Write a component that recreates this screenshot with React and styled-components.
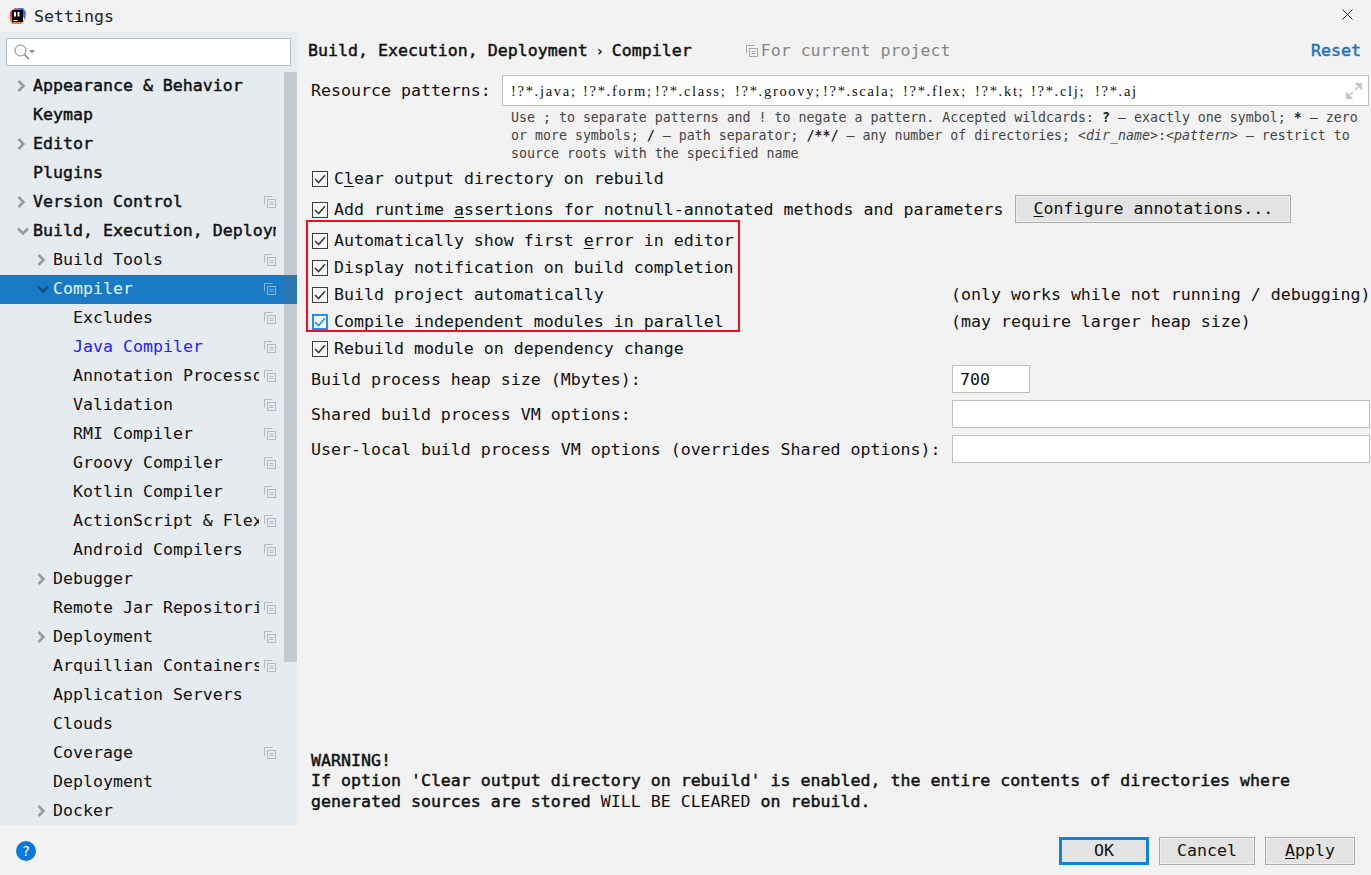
import React from "react";
import styled, { createGlobalStyle, css } from "styled-components";

const mono = `"DejaVu Sans Mono", "Liberation Mono", monospace`;

// the original font's bold is lighter than DejaVu Bold
const heavy = css`
  font-weight: 400;
  -webkit-text-stroke: 0.45px currentColor;
`;

const treeItems = [
  { label: "Appearance & Behavior", level: 0, bold: true, arrow: "right" },
  { label: "Keymap", level: 0, bold: true },
  { label: "Editor", level: 0, bold: true, arrow: "right" },
  { label: "Plugins", level: 0, bold: true },
  { label: "Version Control", level: 0, bold: true, arrow: "right", project: true },
  { label: "Build, Execution, Deployment", level: 0, bold: true, arrow: "down" },
  { label: "Build Tools", level: 1, arrow: "right", project: true },
  { label: "Compiler", level: 1, arrow: "down", project: true, selected: true },
  { label: "Excludes", level: 2, project: true },
  { label: "Java Compiler", level: 2, project: true, modified: true },
  { label: "Annotation Processors", level: 2, project: true },
  { label: "Validation", level: 2, project: true },
  { label: "RMI Compiler", level: 2, project: true },
  { label: "Groovy Compiler", level: 2, project: true },
  { label: "Kotlin Compiler", level: 2, project: true },
  { label: "ActionScript & Flex", level: 2, project: true },
  { label: "Android Compilers", level: 2, project: true },
  { label: "Debugger", level: 1, arrow: "right" },
  { label: "Remote Jar Repositories", level: 1, project: true },
  { label: "Deployment", level: 1, arrow: "right", project: true },
  { label: "Arquillian Containers", level: 1, project: true },
  { label: "Application Servers", level: 1 },
  { label: "Clouds", level: 1 },
  { label: "Coverage", level: 1, project: true },
  { label: "Deployment", level: 1 },
  { label: "Docker", level: 1, arrow: "right" },
];

const patterns = ["!?*.java;", "!?*.form;", "!?*.class;", "!?*.groovy;", "!?*.scala;", "!?*.flex;", "!?*.kt;", "!?*.clj;", "!?*.aj"];

const Global = createGlobalStyle`
  html, body { margin: 0; padding: 0; background: #f2f2f2; }
  * { box-sizing: border-box; }
`;

const Window = styled.div`
  width: 1371px;
  height: 875px;
  display: grid;
  grid-template-rows: 32px 793px 50px;
  background: #f2f2f2;
  color: #111;
  font: 16.6px/20px ${mono};
  overflow: hidden;
`;

const TitleBar = styled.div`
  display: flex;
  align-items: center;
  padding: 0 18px 0 9px;
  gap: 8px;
  color: #222;
`;

const TitleText = styled.span`
  flex: 1;
  padding-top: 2px;
`;

const CloseIcon = styled.svg`
  margin-bottom: 4px;
`;

const Body = styled.div`
  display: grid;
  grid-template-columns: 297px 1fr;
  min-height: 0;
`;

const Sidebar = styled.aside`
  position: relative;
  background: #e6ebf0;
  overflow: hidden;
`;

const SearchBox = styled.div`
  height: 28px;
  margin: 6px 6px 6px;
  background: #fff;
  border: 1px solid #bcbfc2;
  display: flex;
  align-items: center;
  padding-left: 7px;
`;

const Tree = styled.div`
  display: flex;
  flex-direction: column;
`;

const Row = styled.div`
  height: 29px;
  flex: none;
  display: flex;
  align-items: center;
  padding: 0 0 2px ${(p) => 14 + p.$level * 20}px;
  background: ${(p) => (p.$selected ? "#1a7bc4" : "transparent")};
  color: ${(p) => (p.$selected ? "#e6f3fd" : p.$modified ? "#2222ff" : "#111")};
  ${(p) => p.$bold && heavy}
`;

const Arrow = styled.span`
  width: 19px;
  flex: none;
  display: flex;
  align-items: center;
  padding-left: 3px;
`;

const RowLabel = styled.span`
  width: ${(p) => 259 - 33 - p.$level * 20 + (p.$wide ? 17 : 0)}px;
  overflow: hidden;
  white-space: nowrap;
`;

const ProjectSlot = styled.span`
  margin-left: 5px;
  display: flex;
  -webkit-text-stroke: 0;
`;

const ScrollThumb = styled.div`
  position: absolute;
  top: 40px;
  right: 0;
  width: 13px;
  height: 590px;
  background: rgba(100, 105, 115, 0.25);
`;

const Content = styled.main`
  padding: 9px 1px 0 11px;
  display: flex;
  flex-direction: column;
  position: relative;
  min-width: 0;
`;

const Header = styled.div`
  display: flex;
  align-items: center;
  height: 20px;
  margin-bottom: 14px;
`;

const Crumb = styled.span`
  ${heavy}
`;

const CrumbSep = styled.span`
  width: 24px;
  text-align: center;
  font-size: 14px;
  font-weight: 700;
`;

const ScopeNote = styled.span`
  display: flex;
  align-items: center;
  gap: 3px;
  margin-left: 54px;
  color: #858585;
`;

const ResetLink = styled.span`
  margin-left: auto;
  margin-right: 9px;
  color: #1a70c4;
  ${heavy}
`;

const PatternRow = styled.div`
  display: grid;
  grid-template-columns: 191px 867px;
  align-items: center;
  padding-left: 3px;
`;

const TextBox = styled.div`
  height: ${(p) => p.$h || 28}px;
  width: ${(p) => (p.$w ? `${p.$w}px` : "100%")};
  background: #fff;
  border: 1px solid #bfbfbf;
  display: flex;
  align-items: center;
  justify-content: space-between;
  padding: 0 6px 0 7px;
`;

const PatternText = styled.span`
  display: flex;
  padding-left: 1px;
`;

const PatternToken = styled.span`
  width: ${(p) => p.$len * 8}px;
  font: 14.5px/20px "Liberation Serif", serif;
  letter-spacing: 1.7px;
  white-space: nowrap;
  color: #111;
`;

const HelpText = styled.div`
  margin: 3px 0 0 203px;
  font-size: 13.28px;
  line-height: 18px;
  white-space: nowrap;
  color: #444;
  b { color: #222; }
  i { font-style: italic; }
`;

const CheckList = styled.div`
  margin-top: 2px;
  display: flex;
  flex-direction: column;
  padding-left: 4px;
`;

const CheckRow = styled.div`
  height: ${(p) => p.$h || 27}px;
  display: flex;
  align-items: center;
  gap: 6px;
  white-space: nowrap;
`;

const Box = styled.span`
  width: 16px;
  height: 16px;
  flex: none;
  border: ${(p) => (p.$focus ? "2px solid #1f8fe8" : "1px solid #3c3c3c")};
  background: #f7f7f7;
  display: flex;
  align-items: center;
  justify-content: center;
  color: ${(p) => (p.$focus ? "#1f8fe8" : "#3c3c3c")};
`;

const CheckNote = styled.span`
  position: absolute;
  left: 654px;
`;

const Button = styled.span`
  display: inline-flex;
  align-items: center;
  justify-content: center;
  height: 28px;
  width: ${(p) => p.$w}px;
  background: #e3e3e3;
  border: 1px solid #adadad;
  box-shadow: inset 0 0 0 1px #f0f0f0;
  color: #111;
  ${(p) =>
    p.$primary &&
    `border: 3px solid #0a84e0; box-shadow: none;`}
`;

const ConfigureButton = styled(Button)`
  margin: 0 0 1px 6px;
  padding-bottom: 1px;
`;

const Key = styled.span`
  text-decoration: underline;
  text-underline-offset: 2px;
`;

const Highlight = styled.div`
  position: absolute;
  left: 9px;
  top: 188px;
  width: 434px;
  height: 112px;
  border: 2px solid #e81123;
  pointer-events: none;
`;

const FieldRow = styled.div`
  height: 28px;
  display: grid;
  grid-template-columns: 641px 1fr;
  align-items: center;
  padding-left: 3px;
  > span, > div { padding-top: 2px; }
`;

const FieldRows = styled.div`
  margin-top: 3px;
  display: flex;
  flex-direction: column;
  gap: 7px;
`;

const Warning = styled.div`
  margin-top: auto;
  padding: 0 0 12.6px 3px;
  line-height: 20.5px;
  ${heavy}
  span { -webkit-text-stroke: 0; }
`;

const Footer = styled.footer`
  display: flex;
  align-items: center;
  padding: 1px 16px 0 16px;
  gap: 10px;
`;

const HelpButton = styled.span`
  width: 20px;
  height: 20px;
  margin-right: auto;
  border-radius: 50%;
  background: #0a78dc;
  color: #fff;
  display: flex;
  align-items: center;
  justify-content: center;
  font-size: 14px;
`;

const RightChevron = () => (
  <svg width="9" height="12" viewBox="0 0 9 12">
    <path d="M1.500 1 6.500 6l-5 5" fill="none" stroke="#98999b" strokeWidth="2.500" />
  </svg>
);

const DownChevron = ({ color }) => (
  <svg width="12" height="8" viewBox="0 0 12 8">
    <path d="M1 1.500 6 6.500l5-5" fill="none" stroke={color} strokeWidth="2.500" />
  </svg>
);

const ProjectIcon = ({ color = "#b4b9bf" }) => (
  <svg width="12" height="12" viewBox="0 0 12 12" fill="none" stroke={color}>
    <path d="M.5 8.500v-8h8" />
    <rect x="3.500" y="3.500" width="8" height="8" />
    <path d="M5.500 6.500h4M5.500 8.500h4" />
  </svg>
);

const CheckMark = () => (
  <svg width="12" height="10" viewBox="0 0 12 10">
    <path d="M1 5l3.600 3.600L11 1.200" fill="none" stroke="currentColor" strokeWidth="1.600" />
  </svg>
);

const AppLogo = () => (
  <svg width="17" height="16" viewBox="0 0 17 16">
    <path d="M1 4 6 0l5 1-8 14-2-3z" fill="#fc2f6e" />
    <path d="M8 0h6l3 4-1 8-5-9z" fill="#3b6fe8" />
    <path d="M0 9l3 7h9l3-3-8-5z" fill="#f97a12" />
    <rect x="3" y="2" width="11" height="12" fill="#000" />
    <rect x="4.500" y="12" width="4" height="1" fill="#fff" />
    <path d="M5 4h2v4.500H5zM8.500 4h2v4.500h-2z" fill="#fff" />
  </svg>
);

const SearchIcon = () => (
  <svg width="22" height="16" viewBox="0 0 22 16">
    <circle cx="6.500" cy="6.500" r="5.500" fill="none" stroke="#7f7f7f" />
    <path d="M10.500 10.500 15 15" stroke="#7f7f7f" strokeWidth="1.500" />
    <path d="M15 6h6l-3 3.500z" fill="#8c8c8c" />
  </svg>
);

const ExpandIcon = () => (
  <svg width="16" height="16" viewBox="0 0 16 16" fill="#c4c7ca" stroke="#c4c7ca">
    <path d="M9.500.5h6v6zM.5 9.500v6h6z" />
    <path d="M12 4 9 7M4 12l3-3" fill="none" strokeWidth="1.500" />
  </svg>
);

function TreeRow({ item }) {
  const { label, level, bold, arrow, project, selected, modified } = item;
  return (
    <Row $level={level} $bold={bold} $selected={selected} $modified={modified}>
      <Arrow>
        {arrow === "right" && <RightChevron />}
        {arrow === "down" && <DownChevron color={selected ? "#0e4f80" : "#98999b"} />}
      </Arrow>
      <RowLabel $level={level} $wide={bold && !project}>{label}</RowLabel>
      {project && (
        <ProjectSlot>
          <ProjectIcon color={selected ? "#8fb1cc" : undefined} />
        </ProjectSlot>
      )}
    </Row>
  );
}

function Check({ h, focus, children }) {
  return (
    <CheckRow $h={h}>
      <Box $focus={focus}>
        <CheckMark />
      </Box>
      {children}
    </CheckRow>
  );
}

export default function App() {
  return (
    <Window>
      <Global />
      <TitleBar>
        <AppLogo />
        <TitleText>Settings</TitleText>
        <CloseIcon width="11" height="11" viewBox="0 0 11 11">
          <path d="M.5.5l10 10M10.500.5l-10 10" stroke="#222" />
        </CloseIcon>
      </TitleBar>

      <Body>
        <Sidebar>
          <SearchBox>
            <SearchIcon />
          </SearchBox>
          <Tree>
            {treeItems.map((item, i) => (
              <TreeRow key={i} item={item} />
            ))}
          </Tree>
          <ScrollThumb />
        </Sidebar>

        <Content>
          <Header>
            <Crumb>Build, Execution, Deployment</Crumb>
            <CrumbSep>›</CrumbSep>
            <Crumb>Compiler</Crumb>
            <ScopeNote>
              <ProjectIcon color="#a6a6a6" />
              For current project
            </ScopeNote>
            <ResetLink>Reset</ResetLink>
          </Header>

          <PatternRow>
            <span>Resource patterns:</span>
            <TextBox $h={31}>
              <PatternText>
                {patterns.map((p) => (
                  <PatternToken key={p} $len={p.length}>{p}</PatternToken>
                ))}
              </PatternText>
              <ExpandIcon />
            </TextBox>
          </PatternRow>

          <HelpText>
            Use ; to separate patterns and ! to negate a pattern. Accepted wildcards: <b>?</b> — exactly one symbol; <b>*</b> — zero
            <br />
            or more symbols; <b>/</b> — path separator; <b>/**/</b> — any number of directories; <i>&lt;dir_name&gt;</i>:<i>&lt;pattern&gt;</i> — restrict to
            <br />
            source roots with the specified name
          </HelpText>

          <CheckList>
            <Check>
              <span>C<Key>l</Key>ear output directory on rebuild</span>
            </Check>
            <Check h={35}>
              <span>Add runtime <Key>a</Key>ssertions for notnull-annotated methods and parameters</span>
              <ConfigureButton $w={276}><span><Key>C</Key>onfigure annotations...</span></ConfigureButton>
            </Check>
            <Check>
              <span>Automatically show first <Key>e</Key>rror in editor</span>
            </Check>
            <Check>
              <span>Display notification on build completion</span>
            </Check>
            <Check>
              <span>Build project automatically</span>
              <CheckNote>(only works while not running / debugging)</CheckNote>
            </Check>
            <Check focus>
              <span>Compile independent modules in parallel</span>
              <CheckNote>(may require larger heap size)</CheckNote>
            </Check>
            <Check>
              <span>Rebuild module on dependency change</span>
            </Check>
          </CheckList>

          <FieldRows>
            <FieldRow>
              <span>Build process heap size (Mbytes):</span>
              <TextBox $w={78}>700</TextBox>
            </FieldRow>
            <FieldRow>
              <span>Shared build process VM options:</span>
              <TextBox />
            </FieldRow>
            <FieldRow>
              <span>User-local build process VM options (overrides Shared options):</span>
              <TextBox />
            </FieldRow>
          </FieldRows>

          <Warning>
            WARNING!
            <br />
            If option 'Clear output directory on rebuild' is enabled, the entire contents of directories where
            <br />
            generated sources are stored <span>WILL BE CLEARED</span> on rebuild.
          </Warning>

          <Highlight />
        </Content>
      </Body>

      <Footer>
        <HelpButton>?</HelpButton>
        <Button $w={90} $primary>OK</Button>
        <Button $w={96}>Cancel</Button>
        <Button $w={90}><span><Key>A</Key>pply</span></Button>
      </Footer>
    </Window>
  );
}
